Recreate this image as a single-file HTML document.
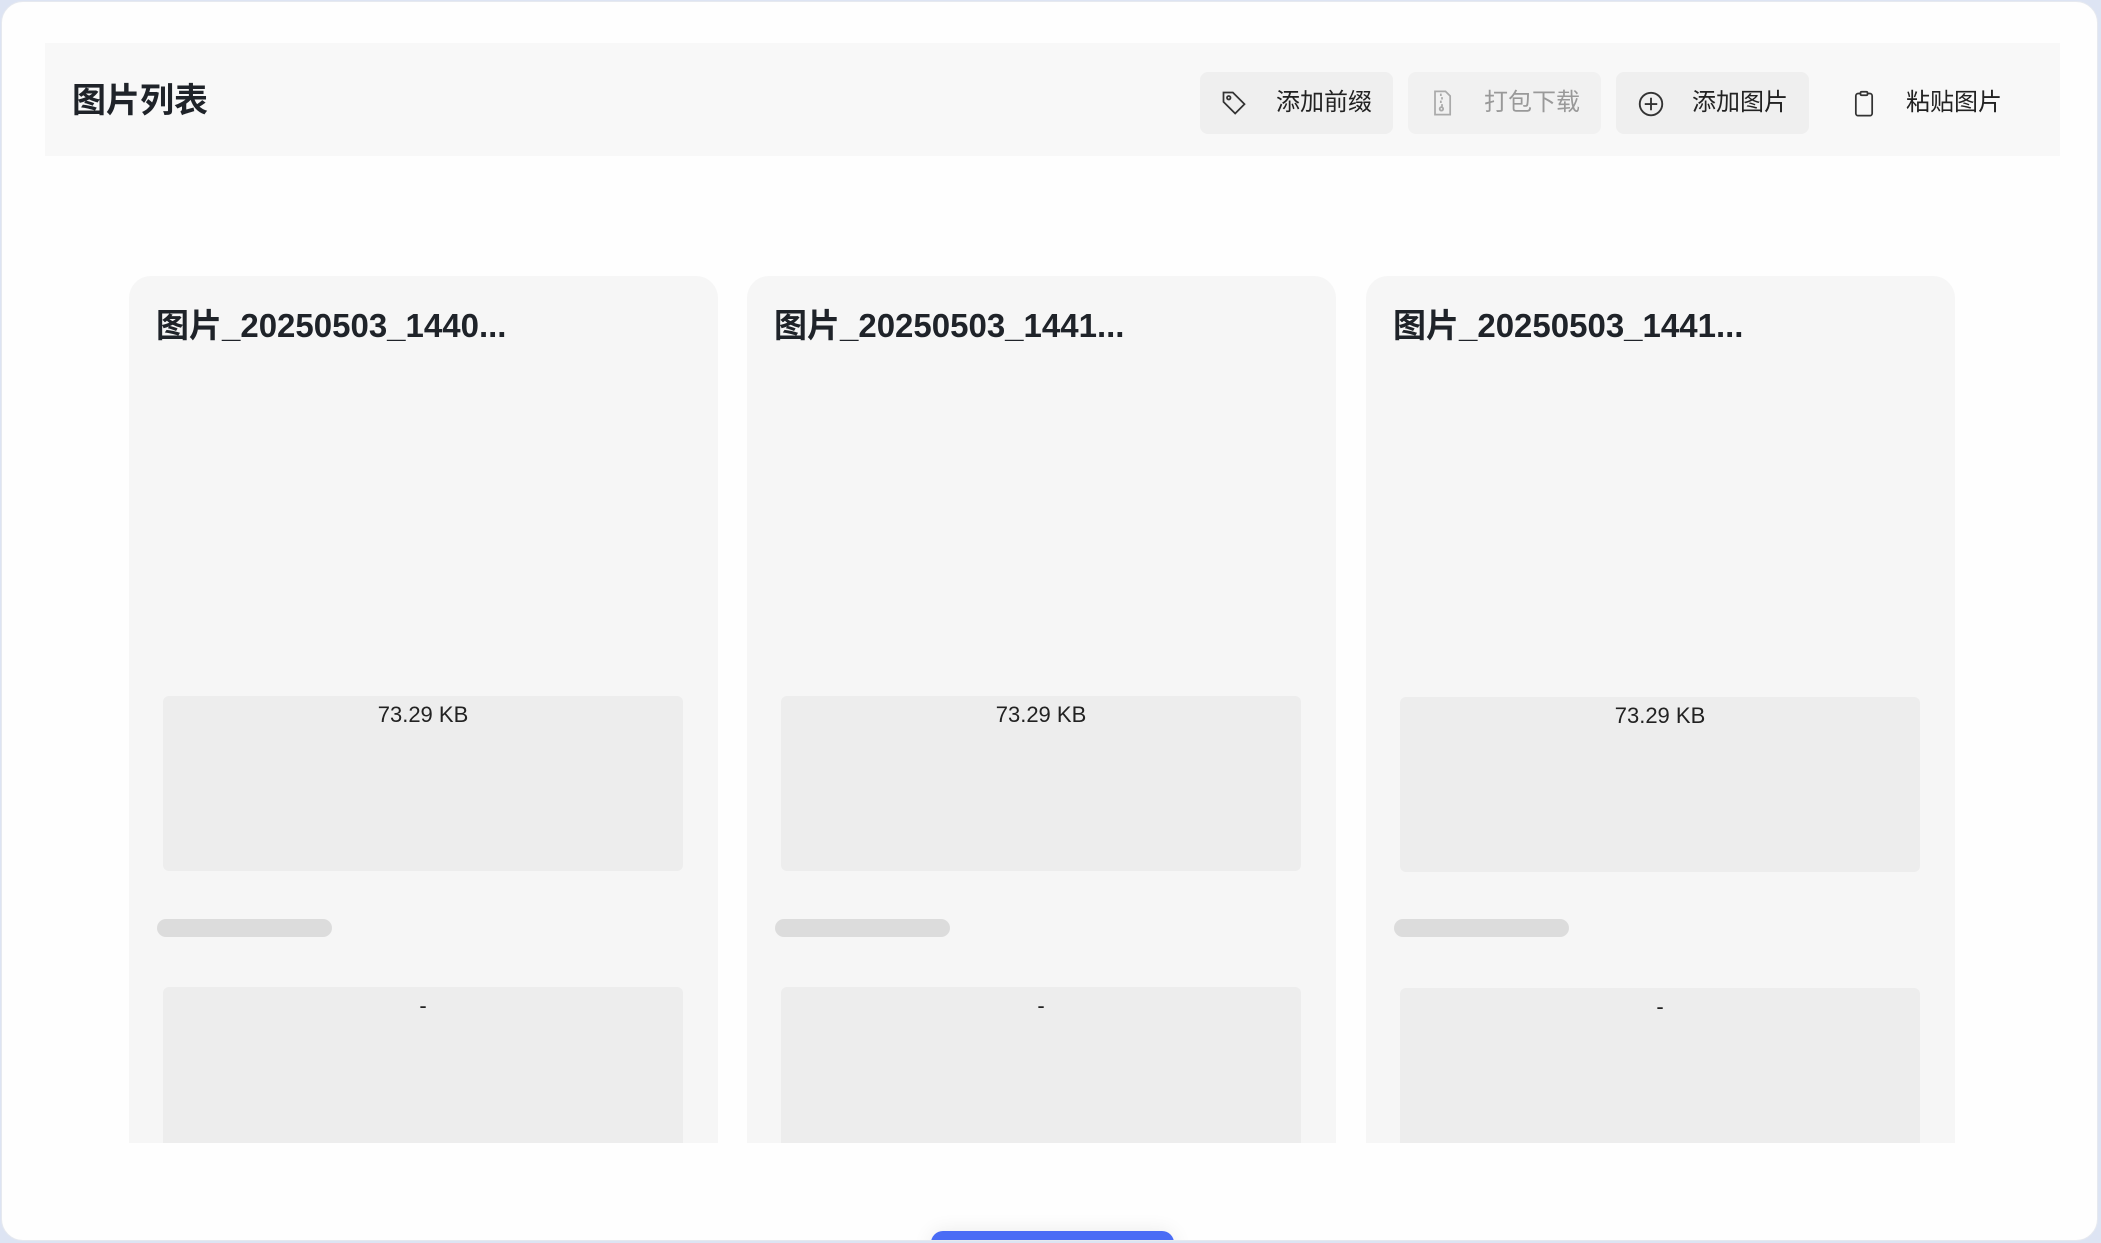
<!DOCTYPE html>
<html><head><meta charset="utf-8"><style>
*{margin:0;padding:0;box-sizing:border-box}
body{width:2101px;height:1243px;background:#dde4f3;overflow:hidden;font-family:"Liberation Sans","Noto Sans CJK SC",sans-serif;color:#222;position:relative}
.win{position:absolute;left:1px;top:1px;width:2097px;height:1240px;background:#fefefe;border-radius:22px;border:1px solid #e6e9ef;overflow:hidden}
.hdr{position:absolute;left:43px;top:41px;width:2015px;height:113px;background:#f8f8f8}
.ttl{position:absolute;left:27px;top:39px;font-size:34px;font-weight:bold;line-height:38px;color:#1f2329}
.btn{position:absolute;top:29px;height:62px;border-radius:8px;background:#efefef;font-size:24px;line-height:62px;color:#222}
.btn svg{position:absolute;left:20px;top:17px}
.btn span{position:absolute;left:76px}
.card{position:absolute;top:274px;width:589px;height:867px;background:#f6f6f6;border-radius:22px 22px 0 0;overflow:hidden}
.ct{position:absolute;left:27px;top:31px;font-size:33px;font-weight:bold;color:#1f2329;line-height:38px}
.box{position:absolute;left:34px;width:520px;background:#ededed;border-radius:6px;text-align:center;font-size:22px;color:#222}
.pill{position:absolute;left:28px;top:643px;width:175px;height:18px;border-radius:9px;background:#dcdcdc}
.blue{position:absolute;left:929px;top:1229px;width:243px;height:40px;background:#4a6cf5;border-radius:12px;box-shadow:0 0 20px rgba(0,0,0,.08)}
</style></head><body>
<div class="win">
<div class="hdr">
<div class="ttl">图片列表</div>
<div class="btn" style="left:1155px;width:193px">
<svg width="28" height="28" viewBox="0 0 24 24" fill="none" stroke="#333" stroke-width="1.5"><path d="M3 3h8l10 10-8 8L3 11z"/><circle cx="7.5" cy="7.5" r="1.5"/></svg><span>添加前缀</span></div>
<div class="btn" style="left:1363px;width:193px;background:#f1f1f1;color:#999">
<svg width="28" height="28" viewBox="0 0 24 24" fill="none" stroke="#aaa" stroke-width="1.5"><path d="M6 2h9l4 4v16H6z"/><path d="M11 4v2M12 7v2M11 10v2M12 13v2"/><circle cx="11.5" cy="17" r="1.5"/></svg><span>打包下载</span></div>
<div class="btn" style="left:1571px;width:193px">
<svg width="30" height="30" viewBox="0 0 24 24" fill="none" stroke="#333" stroke-width="1.5"><circle cx="12" cy="12" r="9"/><path d="M12 7v10M7 12h10"/></svg><span>添加图片</span></div>
<div class="btn" style="left:1785px;width:195px;background:none">
<svg width="28" height="30" viewBox="0 0 24 24" fill="none" stroke="#333" stroke-width="1.5"><rect x="5" y="3" width="14" height="19" rx="2"/><rect x="9" y="1.5" width="6" height="3" rx="1" fill="#f8f8f8"/></svg><span>粘贴图片</span></div>
</div>
<div class="card" style="left:127px"><div class="ct">图片_20250503_1440...</div>
<div class="box" style="top:420px;height:175px;line-height:38px">73.29 KB</div><div class="pill"></div>
<div class="box" style="top:711px;height:170px;line-height:38px">-</div></div>
<div class="card" style="left:745px"><div class="ct">图片_20250503_1441...</div>
<div class="box" style="top:420px;height:175px;line-height:38px">73.29 KB</div><div class="pill"></div>
<div class="box" style="top:711px;height:170px;line-height:38px">-</div></div>
<div class="card" style="left:1364px"><div class="ct">图片_20250503_1441...</div>
<div class="box" style="top:421px;height:175px;line-height:38px">73.29 KB</div><div class="pill"></div>
<div class="box" style="top:712px;height:170px;line-height:38px">-</div></div>
<div class="blue"></div>
</div>
</body></html>
